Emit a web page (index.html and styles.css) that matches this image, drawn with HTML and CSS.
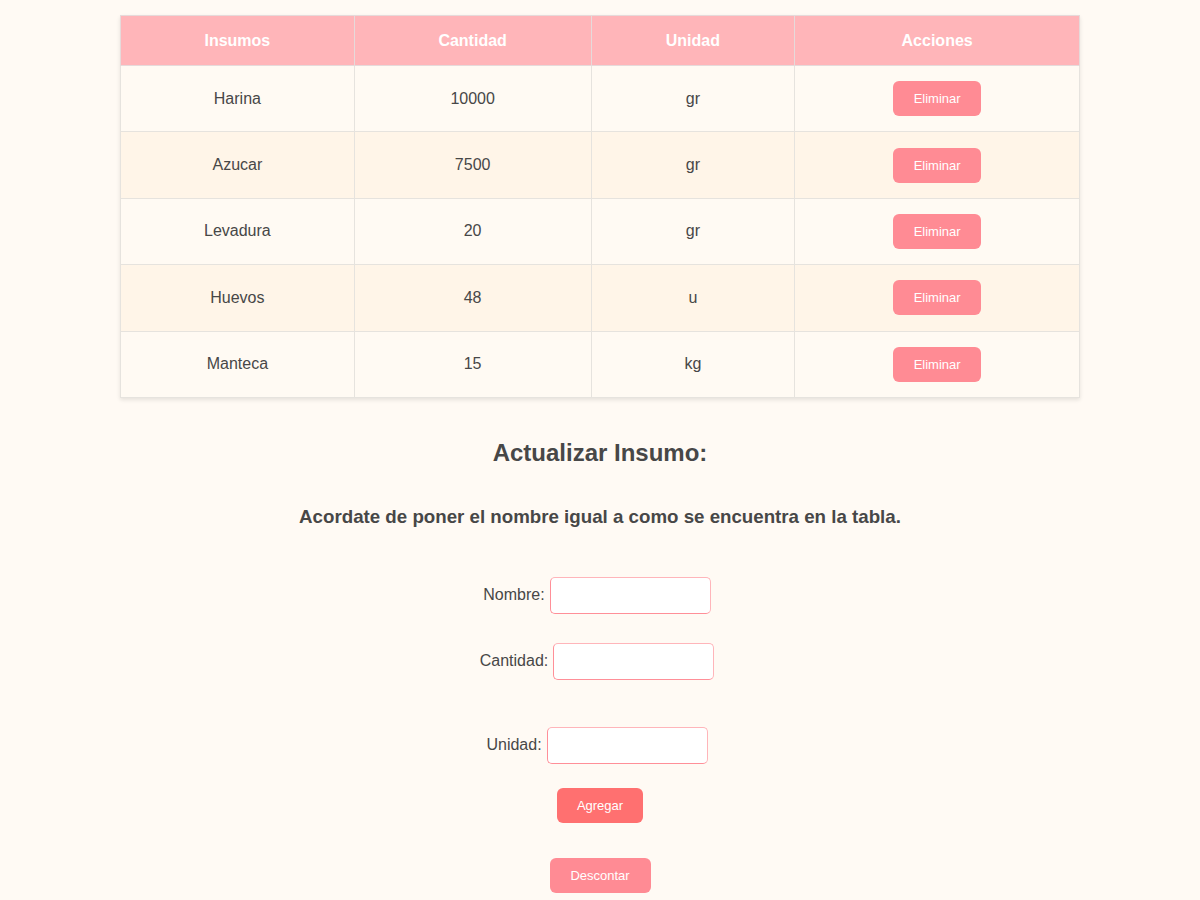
FILE: index.html
```html
<!DOCTYPE html>
<html lang="es">
<head>
<meta charset="utf-8">
<title>Insumos</title>
<link rel="stylesheet" href="styles.css">
</head>
<body>
<div class="page">
  <table class="tabla">
    <colgroup>
      <col class="c1"><col class="c2"><col class="c3"><col class="c4">
    </colgroup>
    <thead>
      <tr><th>Insumos</th><th>Cantidad</th><th>Unidad</th><th>Acciones</th></tr>
    </thead>
    <tbody>
      <tr><td>Harina</td><td>10000</td><td>gr</td><td><button class="btn btn-del">Eliminar</button></td></tr>
      <tr><td>Azucar</td><td>7500</td><td>gr</td><td><button class="btn btn-del">Eliminar</button></td></tr>
      <tr><td>Levadura</td><td>20</td><td>gr</td><td><button class="btn btn-del">Eliminar</button></td></tr>
      <tr><td>Huevos</td><td>48</td><td>u</td><td><button class="btn btn-del">Eliminar</button></td></tr>
      <tr><td>Manteca</td><td>15</td><td>kg</td><td><button class="btn btn-del">Eliminar</button></td></tr>
    </tbody>
  </table>

  <h2 class="titulo">Actualizar Insumo:</h2>
  <h3 class="aviso">Acordate de poner el nombre igual a como se encuentra en la tabla.</h3>

  <form class="form">
    <div class="campo"><label>Nombre:</label><input type="text"></div>
    <div class="campo campo-cantidad"><label>Cantidad:</label><input type="text"></div>
    <div class="campo campo-unidad"><label>Unidad:</label><input type="text"></div>
    <button type="button" class="btn btn-add">Agregar</button>
    <button type="button" class="btn btn-desc">Descontar</button>
  </form>
</div>
</body>
</html>
```

FILE: styles.css
```css
html, body {
  margin: 0;
  padding: 0;
  background: #fffaf4;
  font-family: "Liberation Sans", Arial, sans-serif;
  color: #474747;
}

.page {
  display: flex;
  flex-direction: column;
  align-items: center;
  padding-top: 15px;
}

.tabla {
  width: 960px;
  border-collapse: collapse;
  box-shadow: 0 2px 4px rgba(0, 0, 0, 0.1);
  background: #fffaf3;
  border: 1px solid #e2e0dc;
}

.c1 { width: 234px; }
.c2 { width: 237px; }
.c3 { width: 204px; }
.c4 { width: 285px; }

.tabla th {
  background: #ffb5b9;
  color: #ffffff;
  font-weight: bold;
  font-size: 16px;
  height: 49px;
  padding: 0;
  border: 1px solid #e6dada;
  text-align: center;
}

.tabla td {
  height: 65.4px;
  padding: 0;
  font-size: 16px;
  text-align: center;
  border: 1px solid #e6e3de;
  color: #474747;
}

.tabla tbody tr:nth-child(even) td {
  background: #fff5e8;
}

.btn {
  border: none;
  border-radius: 6px;
  color: #ffffff;
  font-family: "Liberation Sans", Arial, sans-serif;
  font-size: 13px;
  height: 35px;
  cursor: pointer;
}

.btn-del {
  width: 88px;
  background: #ff8b94;
  vertical-align: middle;
}

.titulo {
  margin: 41px 0 0;
  font-size: 24px;
  font-weight: bold;
  line-height: 28px;
  color: #474747;
}

.aviso {
  margin: 39px 0 0;
  font-size: 18.72px;
  font-weight: bold;
  line-height: 22px;
  color: #474747;
}

.form {
  display: flex;
  flex-direction: column;
  align-items: center;
  margin-top: 49px;
}

.campo {
  display: flex;
  align-items: center;
  gap: 5px;
  font-size: 16px;
  padding-right: 6px;
}

.campo input {
  box-sizing: border-box;
  width: 161px;
  height: 37px;
  border: 1px solid;
  border-color: #ffb5ba #ffb5ba #ff8f98 #ff8f98;
  border-radius: 5px;
  background: #ffffff;
  padding: 0 8px;
  font-size: 16px;
  outline: none;
}

.campo-cantidad { margin-top: 29px; }
.campo-unidad { margin-top: 47px; }

.btn-add {
  margin-top: 24px;
  width: 86px;
  background: #ff7070;
}

.btn-desc {
  margin-top: 35px;
  width: 101px;
  background: #ff8b94;
}
```
